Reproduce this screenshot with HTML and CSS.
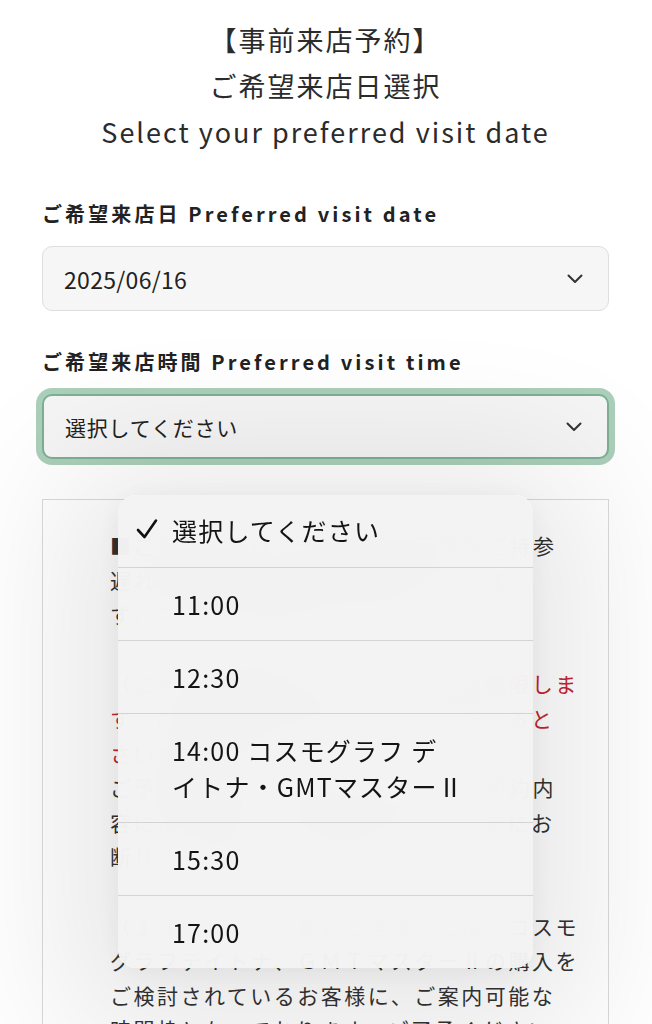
FILE: index.html
```html
<!DOCTYPE html>
<html lang="ja">
<head>
<meta charset="utf-8">
<title>事前来店予約</title>
<link rel="stylesheet" href="styles.css">
</head>
<body>
<main class="page">
  <header class="title">
    <p class="title-line jp">【事前来店予約】</p>
    <p class="title-line jp">ご希望来店日選択</p>
    <p class="title-line en">Select your preferred visit date</p>
  </header>

  <section class="field">
    <label class="field-label">ご希望来店日 Preferred visit date</label>
    <div class="select">
      <span class="select-value num">2025/06/16</span>
      <svg class="chevron" viewBox="0 0 16 10" width="16" height="10"><polyline points="1.5,1.5 8,8 14.5,1.5" fill="none" stroke="#333" stroke-width="2" stroke-linecap="round" stroke-linejoin="round"/></svg>
    </div>
  </section>

  <section class="field">
    <label class="field-label">ご希望来店時間 Preferred visit time</label>
    <div class="select is-focused">
      <span class="select-value">選択してください</span>
      <svg class="chevron" viewBox="0 0 16 10" width="16" height="10"><polyline points="1.5,1.5 8,8 14.5,1.5" fill="none" stroke="#333" stroke-width="2" stroke-linecap="round" stroke-linejoin="round"/></svg>
    </div>
  </section>

  <div class="notice">
    <p class="notice-p gap">■ご来店の際はご予約確認画面等をご持参<br>遅れる場合はご連絡をお願いいたしま<br>す。ご協力をお願いいたします。</p>
    <p class="notice-p red">（ご予約の時間帯により、ご案内を制限しま<br>す。ご都合が悪い場合は連絡いただけると<br>さいわいです。</p>
    <p class="notice-p gap">ご予約確認後、担当者より改めてご予約内<br>容によっては、ご予約をお受けできずにお<br>断りする場合がございます。</p>
    <p class="notice-p">（１４：００）の枠につきましては、コスモ<br>グラフデイトナ、ＧＭＴマスターⅡの購入を<br>ご検討されているお客様に、ご案内可能な<br>時間枠となっております。ご了承ください。</p>
  </div>
</main>

<div class="menu" role="listbox">
  <div class="menu-item is-selected">
    <svg class="check" viewBox="0 0 24 24" width="24" height="24"><polyline points="3,13 9.5,20 21,3.5" fill="none" stroke="#111" stroke-width="2.6" stroke-linecap="round" stroke-linejoin="round"/></svg>
    <span>選択してください</span>
  </div>
  <div class="menu-item"><span>11:00</span></div>
  <div class="menu-item"><span>12:30</span></div>
  <div class="menu-item"><span>14:00 コスモグラフ デ<br>イトナ・GMTマスターⅡ</span></div>
  <div class="menu-item"><span>15:30</span></div>
  <div class="menu-item"><span>17:00</span></div>
</div>
</body>
</html>
```

FILE: styles.css
```css
* { box-sizing: border-box; }

html, body {
  margin: 0;
  padding: 0;
  background: #fff;
}

body {
  font-family: "Noto Sans CJK JP", "Noto Sans", sans-serif;
  color: #2b2b2b;
  height: 1024px;
  overflow: hidden;
  position: relative;
}

.page {
  padding: 17px 43px 0 42px;
}

.title {
  text-align: center;
}

.title-line {
  margin: 0;
  line-height: 46px;
  color: #2b2b2b;
}

.title-line.jp {
  font-size: 27px;
  letter-spacing: 2px;
}

.title-line.en {
  font-size: 27px;
  letter-spacing: 2px;
}

.field {
  margin-top: 46px;
}

.field + .field {
  margin-top: 38px;
}

.field-label {
  display: block;
  font-size: 20px;
  font-weight: 700;
  line-height: 26px;
  letter-spacing: 3.1px;
  color: #222;
}

.select {
  margin-top: 19px;
  height: 65px;
  border: 1.5px solid #dedede;
  border-radius: 10px;
  background: #f6f6f6;
  display: flex;
  align-items: center;
  justify-content: space-between;
  padding: 0 25px 0 21px;
}

.select.is-focused {
  border: 2px solid #7cb092;
  box-shadow: 0 0 0 6px #abcfbb;
  background: #f5f5f5;
}

.select-value {
  font-size: 21px;
  letter-spacing: 0.8px;
  color: #222;
}

.select-value.num {
  font-size: 23px;
  letter-spacing: 0.3px;
}

.chevron {
  display: block;
}

.notice {
  margin-top: 40px;
  border: 1px solid #dadada;
  padding: 28px 20px 0 67px;
  font-size: 21px;
  letter-spacing: 2.5px;
  line-height: 34.6px;
  color: #333;
  white-space: nowrap;
  height: 600px;
}

.notice-p {
  margin: 0;
}

.notice-p.gap {
  margin-bottom: 34.6px;
}

.notice-p.red {
  color: #c4262f;
}

/* iOS style picker menu overlaying the page */
.menu {
  position: absolute;
  left: 118px;
  top: 495px;
  width: 415px;
  border-radius: 18px;
  background: rgba(243, 243, 243, 0.96);
  -webkit-backdrop-filter: blur(30px);
  backdrop-filter: blur(30px);
  box-shadow: 0 20px 140px 60px rgba(0, 0, 0, 0.09), 0 4px 30px rgba(0, 0, 0, 0.06);
  overflow: hidden;
}

.menu-item {
  position: relative;
  display: flex;
  align-items: center;
  min-height: 72px;
  padding: 18px 60px 18px 54px;
  font-size: 25px;
  line-height: 36px;
  letter-spacing: 1.2px;
  color: #141414;
  border-bottom: 1px solid #d3d3d3;
}

.menu-item:first-child {
  min-height: 73px;
  padding-top: 17px;
  padding-bottom: 19px;
}

.menu-item:last-child {
  border-bottom: none;
}

.menu-item .check {
  position: absolute;
  left: 17px;
  top: 50%;
  margin-top: -14px;
}
```
